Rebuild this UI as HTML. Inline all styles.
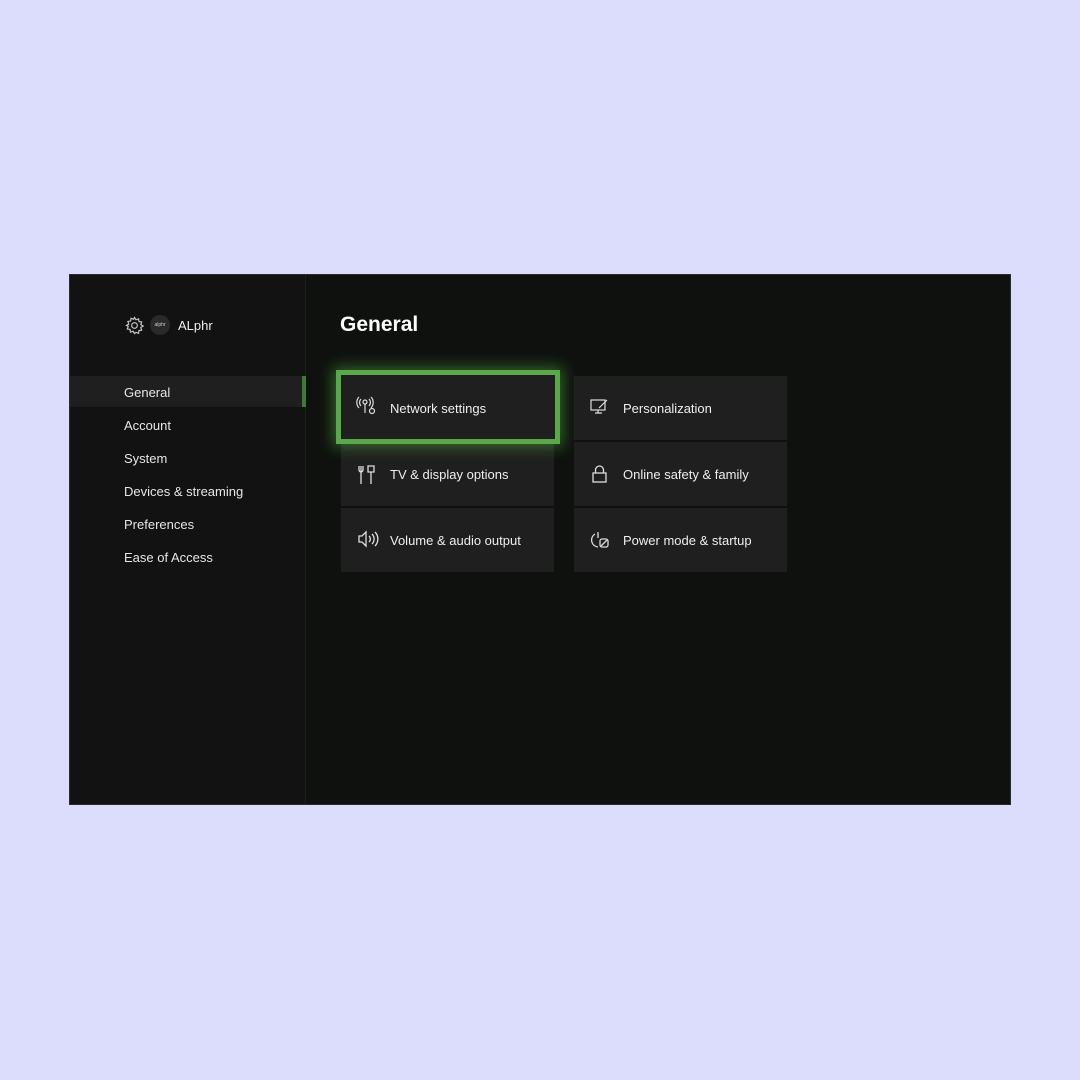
<!DOCTYPE html><html><head><style>
body{margin:0;width:1080px;height:1080px;background:#dcdcfd;position:relative;font-family:"Liberation Sans",sans-serif;overflow:hidden}
.scr{position:absolute;left:69px;top:274px;width:940px;height:529px;background:#0f110f;border:1px solid #2a2a33}
.side{position:absolute;left:0;top:0;width:235px;height:529px;background:#111211;border-right:1px solid #1c1e1c}
.nav{position:absolute;left:54px;color:#e6e6e6;font-size:13px}
.sel{position:absolute;left:0;top:101px;width:235px;height:31px;background:#1e1f1e}
.bar{position:absolute;left:232px;top:101px;width:4px;height:31px;background:#3f7a37}
.t{position:absolute;width:213px;height:64px;background:#1e1f1e;color:#eee;font-size:13px}
.t span{position:absolute;left:49px;top:25px}
.t svg{position:absolute;left:16px;top:22px}
h1{position:absolute;left:270px;top:38px;margin:0;color:#fff;font-size:21px;font-weight:bold}
.foc{position:absolute;left:266px;top:95px;width:214px;height:64px;border:5px solid #5ba84a;box-shadow:0 0 14px 3px rgba(90,200,70,.45);background:#1e1f1e}
</style></head><body><div class="scr">
<div class="side">
<svg style="position:absolute;left:55px;top:41px" width="19" height="19" viewBox="0 0 20 20" fill="none" stroke="#ccc" stroke-width="1.2"><circle cx="10" cy="10" r="3"/><path d="M10 1.5l1.5 2.5 2.8-1 .4 2.9 2.9.4-1 2.8 2.5 1.5-2.5 1.5 1 2.8-2.9.4-.4 2.9-2.8-1L10 18.5l-1.5-2.5-2.8 1-.4-2.9-2.9-.4 1-2.8L1.5 10 4 8.5l-1-2.8 2.9-.4.4-2.9 2.8 1z"/></svg>
<div style="position:absolute;left:80px;top:40px;width:20px;height:20px;border-radius:50%;background:#2a2a2a;color:#ccc;font-size:5px;line-height:20px;text-align:center">alphr</div>
<div style="position:absolute;left:108px;top:43px;color:#eee;font-size:13px">ALphr</div>
<div class="sel"></div><div class="bar"></div>
<div class="nav" style="top:110px">General</div>
<div class="nav" style="top:143px">Account</div>
<div class="nav" style="top:176px">System</div>
<div class="nav" style="top:209px">Devices &amp; streaming</div>
<div class="nav" style="top:242px">Preferences</div>
<div class="nav" style="top:275px">Ease of Access</div>
</div>
<h1>General</h1>
<div class="t" style="left:504px;top:101px"><svg width="20" height="18" viewBox="0 0 20 18" fill="none" stroke="#ddd" stroke-width="1.2"><rect x="1" y="2" width="14" height="10"/><path d="M5 15h7M8 12v3M9 10l8-8"/></svg><span>Personalization</span></div>
<div class="t" style="left:271px;top:167px"><svg width="20" height="20" viewBox="0 0 20 20" fill="none" stroke="#ddd" stroke-width="1.3"><path d="M4 2v18M2 2v4c0 1 1 2 2 2s2-1 2-2V2M11 2h6v6h-6zM14 8v12"/></svg><span>TV &amp; display options</span></div>
<div class="t" style="left:504px;top:167px"><svg width="20" height="20" viewBox="0 0 20 20" fill="none" stroke="#ddd" stroke-width="1.3"><rect x="3" y="9" width="13" height="9"/><path d="M5.5 9V6a4 4 0 0 1 8 0v3"/></svg><span>Online safety &amp; family</span></div>
<div class="t" style="left:271px;top:233px"><svg width="22" height="18" viewBox="0 0 22 18" fill="none" stroke="#ddd" stroke-width="1.3"><path d="M2 6h3l4-4v14l-4-4H2z M12 6a4 4 0 0 1 0 6M15 4a7 7 0 0 1 0 10M18 2a10 10 0 0 1 0 14"/></svg><span>Volume &amp; audio output</span></div>
<div class="t" style="left:504px;top:233px"><svg width="20" height="20" viewBox="0 0 20 20" fill="none" stroke="#ddd" stroke-width="1.3"><path d="M5 4a7 7 0 0 0 3 13M8 2v6"/><rect x="10" y="9" width="8" height="8" rx="2"/><path d="M11 16l6-6"/></svg><span>Power mode &amp; startup</span></div>
<div class="foc"><svg style="position:absolute;left:15px;top:21px" width="22" height="20" viewBox="0 0 22 20" fill="none" stroke="#ddd" stroke-width="1.2"><circle cx="9" cy="6" r="2"/><path d="M9 8v9M5 3a5 5 0 0 0 0 7M13 3a5 5 0 0 1 0 7M3 1a8 8 0 0 0 0 11M15 1a8 8 0 0 1 0 11"/><circle cx="16" cy="15" r="2.5"/></svg><span style="position:absolute;left:49px;top:26px;color:#eee;font-size:13px">Network settings</span></div>
</div></body></html>
